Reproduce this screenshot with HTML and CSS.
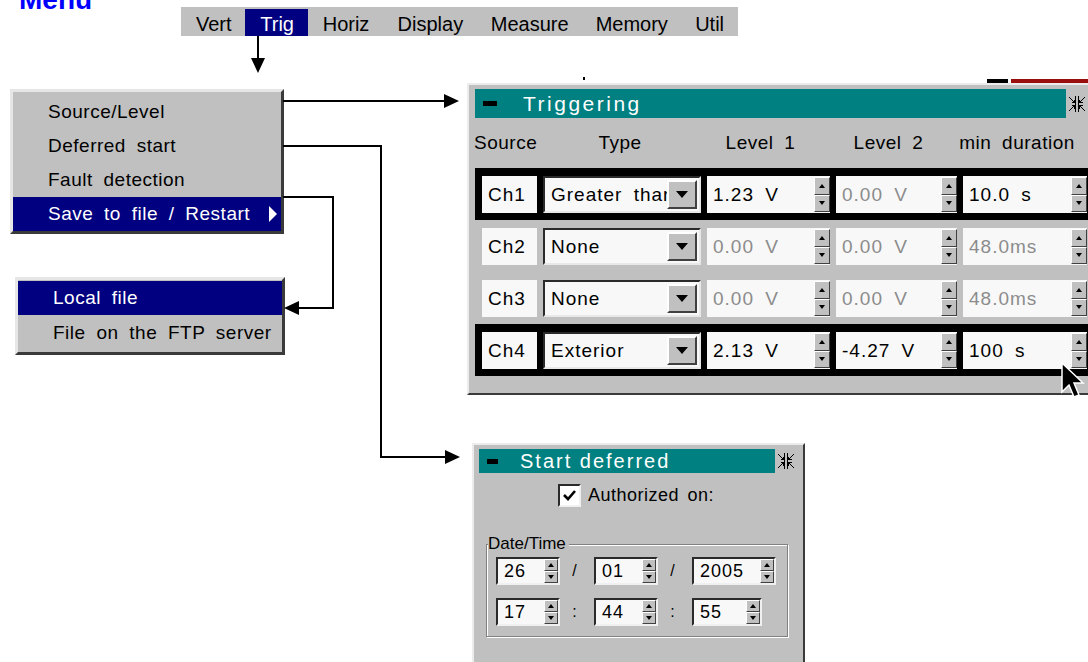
FILE: index.html
```html
<!DOCTYPE html>
<html lang="en">
<head>
    <meta charset="UTF-8">
    <meta name="viewport" content="width=device-width, initial-scale=1.0">
    <title>Trig menu</title>
    <link rel="stylesheet" href="styles.css">
</head>
<body>
<div class="canvas">
    <div class="page-title">Menu</div>

    <div class="menubar">
        <span class="menubar-item">Vert</span>
        <span class="menubar-item active">Trig</span>
        <span class="menubar-item">Horiz</span>
        <span class="menubar-item">Display</span>
        <span class="menubar-item">Measure</span>
        <span class="menubar-item">Memory</span>
        <span class="menubar-item">Util</span>
    </div>

    <ul class="menu menu-trig">
        <li>Source/Level</li>
        <li>Deferred start</li>
        <li>Fault detection</li>
        <li class="selected">Save to file / Restart <span class="submenu-arrow"></span></li>
    </ul>

    <ul class="menu menu-save">
        <li class="selected">Local file</li>
        <li>File on the FTP server</li>
    </ul>

    <!-- bits of windows lying behind -->
    <span class="behind behind-dot"></span>
    <span class="behind behind-black"></span>
    <span class="behind behind-red"></span>

    <div class="window win-trig">
        <div class="titlebar">
            <div class="caption"><span class="minimize"></span>Triggering</div>
            <svg class="shrink" width="20" height="20" viewBox="0 0 20 20">
                <g stroke="#000" stroke-width="1" fill="none" shape-rendering="crispEdges">
                    <path d="M8.5 2V18M11.5 2V18"/>
                    <path d="M2 3L7 8M4.5 8.5H7.5V5.5"/>
                    <path d="M2 17L7 12M4.5 11.5H7.5V14.5"/>
                    <path d="M18 3L13 8M15.5 8.5H12.5V5.5"/>
                    <path d="M18 17L13 12M15.5 11.5H12.5V14.5"/>
                </g>
            </svg>
        </div>

        <div class="trig-head">
            <span class="col-src">Source</span>
            <span class="col-type">Type</span>
            <span class="col-l1">Level 1</span>
            <span class="col-l2">Level 2</span>
            <span class="col-min">min duration</span>
        </div>

        <div class="trig-row selected">
            <div class="src col-src">Ch1</div>
            <div class="combo col-type"><span class="combo-text">Greater than</span><span class="combo-btn"></span></div>
            <div class="spin col-l1"><span class="spin-val">1.23 V</span><span class="spin-btns"><i class="up"></i><i class="down"></i></span></div>
            <div class="spin col-l2"><span class="spin-val dim">0.00 V</span><span class="spin-btns"><i class="up"></i><i class="down"></i></span></div>
            <div class="spin col-min"><span class="spin-val">10.0 s</span><span class="spin-btns"><i class="up"></i><i class="down"></i></span></div>
        </div>

        <div class="trig-row">
            <div class="src col-src">Ch2</div>
            <div class="combo col-type"><span class="combo-text">None</span><span class="combo-btn"></span></div>
            <div class="spin col-l1"><span class="spin-val dim">0.00 V</span><span class="spin-btns"><i class="up"></i><i class="down"></i></span></div>
            <div class="spin col-l2"><span class="spin-val dim">0.00 V</span><span class="spin-btns"><i class="up"></i><i class="down"></i></span></div>
            <div class="spin col-min"><span class="spin-val dim">48.0ms</span><span class="spin-btns"><i class="up"></i><i class="down"></i></span></div>
        </div>

        <div class="trig-row">
            <div class="src col-src">Ch3</div>
            <div class="combo col-type"><span class="combo-text">None</span><span class="combo-btn"></span></div>
            <div class="spin col-l1"><span class="spin-val dim">0.00 V</span><span class="spin-btns"><i class="up"></i><i class="down"></i></span></div>
            <div class="spin col-l2"><span class="spin-val dim">0.00 V</span><span class="spin-btns"><i class="up"></i><i class="down"></i></span></div>
            <div class="spin col-min"><span class="spin-val dim">48.0ms</span><span class="spin-btns"><i class="up"></i><i class="down"></i></span></div>
        </div>

        <div class="trig-row selected">
            <div class="src col-src">Ch4</div>
            <div class="combo col-type"><span class="combo-text">Exterior</span><span class="combo-btn"></span></div>
            <div class="spin col-l1"><span class="spin-val">2.13 V</span><span class="spin-btns"><i class="up"></i><i class="down"></i></span></div>
            <div class="spin col-l2"><span class="spin-val">-4.27 V</span><span class="spin-btns"><i class="up"></i><i class="down"></i></span></div>
            <div class="spin col-min"><span class="spin-val">100 s</span><span class="spin-btns"><i class="up"></i><i class="down"></i></span></div>
        </div>
    </div>

    <div class="window win-defer">
        <div class="titlebar">
            <div class="caption"><span class="minimize"></span>Start deferred</div>
            <svg class="shrink" width="20" height="20" viewBox="0 0 20 20">
                <g stroke="#000" stroke-width="1" fill="none" shape-rendering="crispEdges">
                    <path d="M8.5 2V18M11.5 2V18"/>
                    <path d="M2 3L7 8M4.5 8.5H7.5V5.5"/>
                    <path d="M2 17L7 12M4.5 11.5H7.5V14.5"/>
                    <path d="M18 3L13 8M15.5 8.5H12.5V5.5"/>
                    <path d="M18 17L13 12M15.5 11.5H12.5V14.5"/>
                </g>
            </svg>
        </div>

        <label class="check-row">
            <span class="checkbox">
                <svg width="15" height="15" viewBox="0 0 15 15"><path d="M2 7L6 11L13 3" stroke="#000" stroke-width="2.6" fill="none"/></svg>
            </span>
            Authorized on:
        </label>

        <fieldset class="datetime">
            <legend>Date/Time</legend>
            <div class="dt-grid">
                <div class="dfield"><span class="spin-val">26</span><span class="spin-btns"><i class="up"></i><i class="down"></i></span></div>
                <span class="sep">/</span>
                <div class="dfield"><span class="spin-val">01</span><span class="spin-btns"><i class="up"></i><i class="down"></i></span></div>
                <span class="sep">/</span>
                <div class="dfield year"><span class="spin-val">2005</span><span class="spin-btns"><i class="up"></i><i class="down"></i></span></div>

                <div class="dfield"><span class="spin-val">17</span><span class="spin-btns"><i class="up"></i><i class="down"></i></span></div>
                <span class="sep">:</span>
                <div class="dfield"><span class="spin-val">44</span><span class="spin-btns"><i class="up"></i><i class="down"></i></span></div>
                <span class="sep">:</span>
                <div class="dfield secs"><span class="spin-val">55</span><span class="spin-btns"><i class="up"></i><i class="down"></i></span></div>
            </div>
        </fieldset>
    </div>

    <svg class="arrows" width="1088" height="662">
        <g stroke="#000" stroke-width="2" fill="none">
            <path d="M258 36V60"/>
            <path d="M283 101H446"/>
            <path d="M283 146H381V457H447"/>
            <path d="M283 197H333V308H298"/>
        </g>
        <g fill="#000">
            <path d="M251 58H265L258 73Z"/>
            <path d="M444 94V108L459 101Z"/>
            <path d="M445 450V464L460 457Z"/>
            <path d="M299 301V315L284 308Z"/>
        </g>
    </svg>

    <svg class="pointer" width="32" height="44" viewBox="0 0 32 44">
        <path d="M2 2V31L9 24L14 36L19 34L14 22H23Z" fill="#000" stroke="#fff" stroke-width="1.5"/>
    </svg>
</div>
</body>
</html>
```

FILE: styles.css
```css
body {
    margin: 0;
    background: #fff;
    font-family: "Liberation Sans", Arial, sans-serif;
    color: #000;
}

.canvas {
    position: relative;
    width: 1088px;
    height: 662px;
    overflow: hidden;
}

.page-title {
    position: absolute;
    left: 19px;
    top: -14px;
    font-size: 28px;
    line-height: 28px;
    font-weight: bold;
    color: #0000ff;
}

/* top menu bar */
.menubar {
    position: absolute;
    left: 181px;
    top: 7px;
    width: 557px;
    height: 29px;
    background: #c0c0c0;
    display: flex;
    align-items: flex-end;
    font-size: 20px;
}

.menubar-item {
    height: 27px;
    line-height: 31px;
    padding: 0 15px;
    overflow: hidden;
}

.menubar-item.active {
    background: #000080;
    color: #fff;
}

/* drop down menus */
.menu {
    position: absolute;
    list-style: none;
    margin: 0;
    background: #c0c0c0;
    border: 3px solid;
    border-color: #e6e6e6 #3a3a3a #3a3a3a #e6e6e6;
    font-size: 19px;
    letter-spacing: .5px;
    word-spacing: 5px;
}

.menu li {
    height: 34px;
    display: flex;
    align-items: center;
    padding-left: 35px;
}

.menu li.selected {
    background: #000080;
    color: #fff;
}

.menu-trig {
    left: 10px;
    top: 89px;
    width: 268px;
    padding: 3px 0 0;
}

.menu-save {
    left: 15px;
    top: 277px;
    width: 264px;
    padding: 1px 0 2px;
}

.menu-save li:last-child {
    height: 35px;
}

.submenu-arrow {
    margin-left: auto;
    margin-right: 4px;
    width: 0;
    height: 0;
    border-left: 8px solid #fff;
    border-top: 8px solid transparent;
    border-bottom: 8px solid transparent;
}

.behind {
    position: absolute;
    background: #000;
}

.behind-dot { left: 583px; top: 77px; width: 2px; height: 3px; }
.behind-black { left: 987px; top: 79px; width: 21px; height: 6px; }
.behind-red { left: 1011px; top: 79px; width: 80px; height: 6px; background: #9a0e0e; }

/* windows */
.window {
    position: absolute;
    background: #c0c0c0;
    border: 2px solid;
    border-color: #ececec #3a3a3a #3a3a3a #ececec;
    box-sizing: border-box;
}

.titlebar {
    display: flex;
    align-items: center;
}

.caption {
    display: flex;
    align-items: center;
    background: #008080;
    color: #fff;
}

.minimize {
    background: #000;
}

.shrink {
    margin-left: 1px;
    flex: none;
}

.win-trig {
    left: 467px;
    top: 83px;
    width: 650px;
    height: 312px;
    padding: 4px 0 0 6px;
}

.win-trig .caption {
    width: 591px;
    height: 29px;
    font-size: 21px;
    letter-spacing: 2.5px;
}

.win-trig .minimize {
    width: 14px;
    height: 5px;
    margin: 0 26px 0 8px;
}

.trig-head,
.trig-row {
    display: flex;
    gap: 6px;
    padding-left: 7px;
    font-size: 19px;
    letter-spacing: .5px;
    word-spacing: 5px;
}

.trig-head {
    height: 50px;
    align-items: center;
    text-align: center;
}

.col-src { width: 55px; flex: none; }
.col-type { width: 158px; flex: none; }
.col-l1 { width: 123px; flex: none; }
.col-l2 { width: 121px; flex: none; }
.col-min { width: 124px; flex: none; }

.trig-head .col-src {
    text-align: left;
    margin-left: -8px;
    width: 63px;
    margin-right: -8px;
}

.trig-head .col-type {
    padding-left: 12px;
    box-sizing: border-box;
}

.trig-row {
    height: 52px;
    box-sizing: border-box;
    padding-top: 8px;
    padding-bottom: 7px;
    letter-spacing: 1px;
}

.trig-row.selected {
    background: #000;
}

.src {
    background: #f8f8f8;
    line-height: 37px;
    padding-left: 6px;
    box-sizing: border-box;
}

.combo {
    display: flex;
    box-sizing: border-box;
    border: 2px solid;
    border-color: #2a2a2a #e8e8e8 #e8e8e8 #2a2a2a;
    background: #f8f8f8;
}

.combo-text {
    flex: 1;
    overflow: hidden;
    white-space: nowrap;
    padding-left: 6px;
    line-height: 33px;
}

.combo-btn {
    flex: none;
    width: 30px;
    margin: 2px 2px 2px 0;
    box-sizing: border-box;
    background: #c0c0c0;
    border: 2px solid;
    border-color: #fff #404040 #404040 #fff;
    display: flex;
    align-items: center;
    justify-content: center;
}

.combo-btn::after {
    content: "";
    border-top: 7px solid #000;
    border-left: 6px solid transparent;
    border-right: 6px solid transparent;
}

.spin {
    display: flex;
    background: #f8f8f8;
}

.spin-val {
    flex: 1;
    padding-left: 6px;
    white-space: nowrap;
}

.spin .spin-val {
    line-height: 37px;
}

.dim {
    color: #8c8c8c;
}

.spin-btns {
    flex: none;
    width: 16px;
    display: flex;
    flex-direction: column;
    margin: 1px 0;
}

.spin-btns i {
    flex: 1;
    background: #c0c0c0;
    border: 1px solid;
    border-color: #fff #404040 #404040 #fff;
    display: flex;
    align-items: center;
    justify-content: center;
}

.spin-btns .up::after {
    content: "";
    border-bottom: 4px solid #000;
    border-left: 3px solid transparent;
    border-right: 3px solid transparent;
}

.spin-btns .down::after {
    content: "";
    border-top: 4px solid #000;
    border-left: 3px solid transparent;
    border-right: 3px solid transparent;
}

/* start deferred window */
.win-defer {
    left: 472px;
    top: 443px;
    width: 333px;
    height: 240px;
    padding: 4px 6px 0 5px;
}

.win-defer .caption {
    width: 296px;
    height: 24px;
    font-size: 20px;
    letter-spacing: 2px;
}

.win-defer .minimize {
    width: 11px;
    height: 5px;
    margin: 0 22px 0 8px;
}

.check-row {
    display: flex;
    align-items: center;
    gap: 7px;
    margin-top: 11px;
    padding-left: 79px;
    height: 23px;
    font-size: 18px;
    letter-spacing: .5px;
    word-spacing: 3px;
}

.checkbox {
    width: 23px;
    height: 23px;
    box-sizing: border-box;
    border: 2px solid;
    border-color: #2a2a2a #f0f0f0 #f0f0f0 #2a2a2a;
    background: #fff;
    display: flex;
    align-items: center;
    justify-content: center;
}

.datetime {
    margin: 27px 0 0 7px;
    width: 302px;
    box-sizing: border-box;
    border: 1px solid #808080;
    box-shadow: 1px 1px 0 #fff, inset 1px 1px 0 #fff;
    padding: 3px 9px 10px 9px;
}

.datetime legend {
    margin-left: -8px;
    padding: 0 3px 0 0;
    font-size: 17px;
    background: #c0c0c0;
}

.dt-grid {
    display: grid;
    grid-template-columns: 64px 34px 64px 34px auto;
    row-gap: 13px;
    align-items: center;
    font-size: 18px;
    letter-spacing: 1px;
}

.dfield {
    display: flex;
    height: 28px;
    box-sizing: border-box;
    border: 2px solid;
    border-color: #2a2a2a #f0f0f0 #f0f0f0 #2a2a2a;
    background: #f8f8f8;
    line-height: 24px;
}

.dfield .spin-btns {
    width: 14px;
    margin: 0;
}

.dfield.year { width: 84px; }
.dfield.secs { width: 70px; }

.sep {
    text-align: center;
    font-size: 16px;
    padding-right: 4px;
}

/* connectors and mouse pointer */
.arrows {
    position: absolute;
    left: 0;
    top: 0;
    pointer-events: none;
}

.pointer {
    position: absolute;
    left: 1060px;
    top: 361px;
}
```
